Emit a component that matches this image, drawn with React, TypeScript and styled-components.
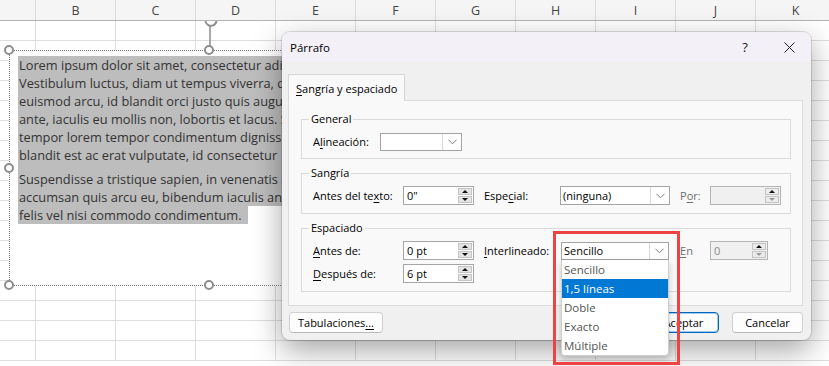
import React from 'react';
import styled, { createGlobalStyle } from 'styled-components';

const GlobalStyle = createGlobalStyle`
  *, *::before, *::after { box-sizing: border-box; }
  html, body { margin: 0; padding: 0; background: #fff; overflow: hidden; }
`;

const COLUMNS = ['', 'B', 'C', 'D', 'E', 'F', 'G', 'H', 'I', 'J', 'K'];
const ROW_COUNT = 17;

const Sheet = styled.div`
  position: relative;
  width: 829px;
  height: 366px;
  overflow: hidden;
  background: #fff;
  font-family: 'Open Sans', 'Noto Sans', sans-serif;
`;

const GridHeader = styled.div`
  position: relative;
  z-index: 2;
  display: grid;
  grid-template-columns: 36px repeat(10, 80px);
  height: 21px;
  background: #f5f5f5;
  border-bottom: 1px solid #b4b4b4;
`;

const HeaderCell = styled.div`
  display: flex;
  align-items: center;
  justify-content: center;
  border-right: 1px solid #dcdcdc;
  font-size: 12.5px;
  color: #444;
`;

const GridBody = styled.div`
  display: grid;
  grid-template-columns: 36px repeat(10, 80px);
  grid-auto-rows: 20px;
`;

const Cell = styled.div`
  border-right: 1px solid #dedede;
  border-bottom: 1px solid #dedede;
`;

/* floating text box on the sheet */
const Shape = styled.div`
  position: absolute;
  left: 9px;
  top: 50px;
  width: 400px;
  height: 236px;
  z-index: 1;
  background: #fff;
  border: 1px dotted #7a7a7a;
  padding: 5px 0 0 8px;
  font-family: 'Open Sans', sans-serif;
  font-size: 12.8px;
  color: #333;
`;

const Handle = styled.div<{ $x: number; $y: number }>`
  position: absolute;
  left: ${p => p.$x - 6}px;
  top: ${p => p.$y - 6}px;
  width: 10px;
  height: 10px;
  border-radius: 50%;
  background: #fff;
  border: 2px solid #8d8d8d;
`;

const RotateArm = styled.svg`
  position: absolute;
  left: 192px;
  top: -40px;
`;

const Paragraph = styled.div<{ $gap?: boolean }>`
  padding-bottom: ${p => (p.$gap ? 6 : 0)}px;
  background: ${p => (p.$gap ? '#bdbdbd' : 'transparent')};
`;

const Line = styled.div<{ $fit?: boolean }>`
  white-space: nowrap;
  line-height: 18px;
  padding-left: 1px;
  width: ${p => (p.$fit ? 'fit-content' : 'auto')};
  padding-right: ${p => (p.$fit ? '6px' : '0')};
  background: #bdbdbd;
`;

/* dialog */
const Dialog = styled.div`
  position: absolute;
  left: 282px;
  top: 32px;
  width: 529px;
  height: 308px;
  z-index: 3;
  background: #f0f0f0;
  border-radius: 8px;
  box-shadow: 0 0 0 1px rgba(0, 0, 0, 0.12), 0 10px 30px rgba(0, 0, 0, 0.36);
  font-family: 'Open Sans', 'Noto Sans', sans-serif;
  font-size: 11px;
  color: #000;
  display: flex;
  flex-direction: column;
`;

const TitleBar = styled.div`
  display: flex;
  align-items: center;
  height: 30px;
  padding-left: 8px;
  background: #f3f0f7;
  border-radius: 8px 8px 0 0;
`;

const Title = styled.div`
  flex: 1;
  font-size: 11.5px;
`;

const TitleButton = styled.div`
  width: 44px;
  height: 30px;
  display: flex;
  align-items: center;
  justify-content: center;
  font-size: 13px;
  color: #222;
`;

const TabRow = styled.div`
  display: flex;
  margin: 12px 0 -1px 6px;
  position: relative;
  z-index: 1;
`;

const Tab = styled.div`
  width: 117px;
  height: 27px;
  display: flex;
  align-items: center;
  padding-left: 7px;
  background: #f9f9f9;
  border: 1px solid #d6d6d6;
  border-bottom: none;
`;

const Panel = styled.div`
  margin-left: 6px;
  width: 515px;
  height: 206px;
  background: #f9f9f9;
  border: 1px solid #dcdcdc;
  padding: 0 11px 0 12px;
`;

const Group = styled.div<{ $top: number; $bottom: number }>`
  margin-top: ${p => p.$top}px;
  border: 1px solid #dadada;
  padding-bottom: ${p => p.$bottom}px;
`;

const GroupLabel = styled.div`
  width: fit-content;
  margin: -8px 0 0 7px;
  padding: 0 2px;
  line-height: 14px;
  background: #f9f9f9;
`;

const Row = styled.div<{ $gap: number }>`
  display: flex;
  align-items: center;
  height: 19px;
  margin-top: ${p => p.$gap}px;
  padding-left: 11px;
`;

const FieldLabel = styled.div<{ $w: number; $ml?: number; $disabled?: boolean }>`
  width: ${p => p.$w}px;
  margin-left: ${p => p.$ml ?? 0}px;
  color: ${p => (p.$disabled ? '#6e6e6e' : '#000')};
  white-space: nowrap;
`;

const Key = styled.span`
  text-decoration: underline;
  text-underline-offset: 2px;
`;

const SpinBox = styled.div<{ $w: number; $disabled?: boolean }>`
  display: flex;
  width: ${p => p.$w}px;
  height: 19px;
  border: 1px solid ${p => (p.$disabled ? '#b4b4b4' : '#a6a6a6')};
  background: ${p => (p.$disabled ? '#f0f0f0' : '#fff')};
  color: ${p => (p.$disabled ? '#8a8a8a' : '#000')};
`;

const SpinValue = styled.div`
  flex: 1;
  display: flex;
  align-items: center;
  padding-left: 3px;
`;

const SpinButtons = styled.div`
  width: 15px;
  display: flex;
  flex-direction: column;
  gap: 1px;
  padding: 1px 1px 1px 0;
`;

const SpinButton = styled.div<{ $faded?: boolean }>`
  flex: 1;
  display: flex;
  align-items: center;
  justify-content: center;
  background: ${p => (p.$faded ? '#ececec' : '#e4e4e4')};
  border: 1px solid #c4c4c4;
`;

const Arrow = styled.div<{ $down?: boolean; $faded?: boolean }>`
  width: 0;
  height: 0;
  border-left: 3px solid transparent;
  border-right: 3px solid transparent;
  ${p =>
    p.$down
      ? `border-top: 3px solid ${p.$faded ? '#9a9a9a' : '#111'};`
      : `border-bottom: 3px solid ${p.$faded ? '#9a9a9a' : '#111'};`}
`;

const Combo = styled.div<{ $w: number; $h: number }>`
  position: relative;
  display: flex;
  width: ${p => p.$w}px;
  height: ${p => p.$h}px;
  border: 1px solid #a3a3a3;
  background: #fff;
`;

const ComboValue = styled.div`
  flex: 1;
  display: flex;
  align-items: center;
  padding-left: 2px;
  white-space: nowrap;
`;

const ComboArrow = styled.div`
  width: 19px;
  display: flex;
  align-items: center;
  justify-content: center;
  border-left: 1px solid #d9d9d9;
`;

const DropList = styled.div`
  position: absolute;
  z-index: 5;
  left: -1px;
  top: calc(100% + 1px);
  width: calc(100% + 2px);
  background: #fff;
  border: 1px solid #cfcfcf;
  border-top: none;
  border-radius: 0 0 4px 4px;
  box-shadow: 0 3px 6px rgba(0, 0, 0, 0.2);
`;

const DropItem = styled.div<{ $active?: boolean }>`
  height: 19px;
  display: flex;
  align-items: center;
  padding-left: 2px;
  font-size: 11.5px;
  color: ${p => (p.$active ? '#fff' : '#555')};
  background: ${p => (p.$active ? '#0078d4' : 'transparent')};
`;

const Footer = styled.div`
  display: flex;
  align-items: center;
  margin-top: 6px;
  padding: 0 8px 0 7px;
`;

const Button = styled.div<{ $w: number; $primary?: boolean; $ml?: number }>`
  width: ${p => p.$w}px;
  height: 21px;
  margin-left: ${p => p.$ml ?? 0}px;
  display: flex;
  align-items: center;
  justify-content: center;
  background: #fdfdfd;
  border: 1px solid ${p => (p.$primary ? '#0067c0' : '#d0d0d0')};
  border-bottom-color: ${p => (p.$primary ? '#0067c0' : '#bababa')};
  box-shadow: ${p => (p.$primary ? 'inset 0 0 0 1px rgba(0, 103, 192, 0.35)' : 'none')};
  border-radius: 4px;
`;

const Spacer = styled.div`
  flex: 1;
`;

const Annotation = styled.div`
  position: absolute;
  left: 553px;
  top: 231px;
  width: 127px;
  height: 134px;
  z-index: 10;
  border: 3px solid #ee4343;
  pointer-events: none;
`;

const Chevron = () => (
  <svg width="9" height="6" viewBox="0 0 9 6">
    <path d="M0.5 0.8 L4.5 4.8 L8.5 0.8" fill="none" stroke="#7c7c7c" strokeWidth="1" />
  </svg>
);

const Spin: React.FC<{ w: number; value: string; disabled?: boolean }> = ({ w, value, disabled }) => (
  <SpinBox $w={w} $disabled={disabled}>
    <SpinValue>{value}</SpinValue>
    <SpinButtons>
      <SpinButton $faded={disabled}>
        <Arrow />
      </SpinButton>
      <SpinButton $faded={disabled}>
        <Arrow $down $faded={disabled} />
      </SpinButton>
    </SpinButtons>
  </SpinBox>
);

const paragraphOne = [
  'Lorem ipsum dolor sit amet, consectetur adipiscing elit.',
  'Vestibulum luctus, diam ut tempus viverra, dui',
  'euismod arcu, id blandit orci justo quis augue.',
  'ante, iaculis eu mollis non, lobortis et lacus. Sed',
  'tempor lorem tempor condimentum dignissim.',
  'blandit est ac erat vulputate, id consectetur',
];

const paragraphTwo = [
  'Suspendisse a tristique sapien, in venenatis ante.',
  'accumsan quis arcu eu, bibendum iaculis ante.',
];

const spacingOptions = ['Sencillo', '1,5 líneas', 'Doble', 'Exacto', 'Múltiple'];

export default function App() {
  return (
    <>
      <GlobalStyle />
      <Sheet>
        <GridHeader>
          {COLUMNS.map((c, i) => (
            <HeaderCell key={i}>{c}</HeaderCell>
          ))}
        </GridHeader>
        <GridBody>
          {Array.from({ length: ROW_COUNT * COLUMNS.length }).map((_, i) => (
            <Cell key={i} />
          ))}
        </GridBody>

        <Shape>
          <RotateArm width="18" height="40" viewBox="0 0 18 40">
            <path d="M4 7 A5.5 5.5 0 1 0 12.5 5" fill="none" stroke="#8d8d8d" strokeWidth="2" />
            <line x1="8" y1="15" x2="8" y2="35" stroke="#8d8d8d" strokeWidth="1.5" />
          </RotateArm>
          <Handle $x={0} $y={0} />
          <Handle $x={200} $y={0} />
          <Handle $x={0} $y={118} />
          <Handle $x={0} $y={235} />
          <Handle $x={200} $y={235} />
          <Paragraph $gap>
            {paragraphOne.map(l => (
              <Line key={l}>{l}</Line>
            ))}
          </Paragraph>
          <Paragraph>
            {paragraphTwo.map(l => (
              <Line key={l}>{l}</Line>
            ))}
            <Line $fit>felis vel nisi commodo condimentum.</Line>
          </Paragraph>
        </Shape>

        <Dialog>
          <TitleBar>
            <Title>Párrafo</Title>
            <TitleButton>?</TitleButton>
            <TitleButton>
              <svg width="11" height="11" viewBox="0 0 11 11">
                <path d="M0.5 0.5 L10.5 10.5 M10.5 0.5 L0.5 10.5" stroke="#222" strokeWidth="1" />
              </svg>
            </TitleButton>
          </TitleBar>

          <TabRow>
            <Tab>
              <span>
                <Key>S</Key>angría y espaciado
              </span>
            </Tab>
          </TabRow>

          <Panel>
            <Group $top={18} $bottom={7}>
              <GroupLabel>General</GroupLabel>
              <Row $gap={6}>
                <FieldLabel $w={67}>
                  A<Key>l</Key>ineación:
                </FieldLabel>
                <Combo $w={82} $h={18}>
                  <ComboValue />
                  <ComboArrow>
                    <Chevron />
                  </ComboArrow>
                </Combo>
              </Row>
            </Group>

            <Group $top={14} $bottom={8}>
              <GroupLabel>Sangría</GroupLabel>
              <Row $gap={6}>
                <FieldLabel $w={90}>
                  Antes del te<Key>x</Key>to:
                </FieldLabel>
                <Spin w={71} value={'0"'} />
                <FieldLabel $w={76} $ml={10}>
                  Espe<Key>c</Key>ial:
                </FieldLabel>
                <Combo $w={110} $h={19}>
                  <ComboValue>(ninguna)</ComboValue>
                  <ComboArrow>
                    <Chevron />
                  </ComboArrow>
                </Combo>
                <FieldLabel $w={30} $ml={10} $disabled>
                  P<Key>o</Key>r:
                </FieldLabel>
                <Spin w={71} value="" disabled />
              </Row>
            </Group>

            <Group $top={14} $bottom={8}>
              <GroupLabel>Espaciado</GroupLabel>
              <Row $gap={6}>
                <FieldLabel $w={90}>
                  <Key>A</Key>ntes de:
                </FieldLabel>
                <Spin w={71} value="0 pt" />
                <FieldLabel $w={77} $ml={10}>
                  <Key>I</Key>nterlineado:
                </FieldLabel>
                <Combo $w={108} $h={18}>
                  <ComboValue>Sencillo</ComboValue>
                  <ComboArrow>
                    <Chevron />
                  </ComboArrow>
                  <DropList>
                    {spacingOptions.map(o => (
                      <DropItem key={o} $active={o === '1,5 líneas'}>
                        {o}
                      </DropItem>
                    ))}
                  </DropList>
                </Combo>
                <FieldLabel $w={30} $ml={11} $disabled>
                  <Key>E</Key>n
                </FieldLabel>
                <Spin w={58} value="0" disabled />
              </Row>
              <Row $gap={4}>
                <FieldLabel $w={90}>
                  <Key>D</Key>espués de:
                </FieldLabel>
                <Spin w={71} value="6 pt" />
              </Row>
            </Group>
          </Panel>

          <Footer>
            <Button $w={94}>
              <span>
                Tabulaciones<Key>...</Key>
              </span>
            </Button>
            <Spacer />
            <Button $w={71} $primary>
              Aceptar
            </Button>
            <Button $w={71} $ml={13}>
              Cancelar
            </Button>
          </Footer>
        </Dialog>

        <Annotation />
      </Sheet>
    </>
  );
}
